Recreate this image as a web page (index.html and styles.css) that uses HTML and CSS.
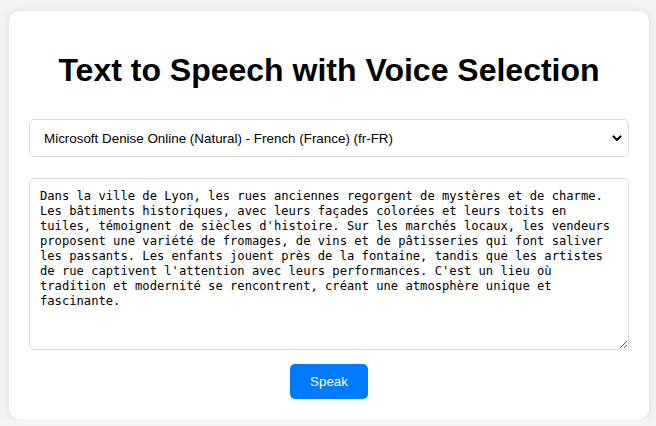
FILE: index.html
```html
<!DOCTYPE html>
<html lang="fr">
<head>
<meta charset="utf-8">
<title>Text to Speech with Voice Selection</title>
<link rel="stylesheet" href="styles.css">
</head>
<body>
<div class="card">
  <h1 class="title">Text to Speech with Voice Selection</h1>
  <div class="select-wrap">
    <select class="voice-select">
      <option>Microsoft Denise Online (Natural) - French (France) (fr-FR)</option>
    </select>
    <svg class="chevron" width="10" height="7" viewBox="0 0 10 7" aria-hidden="true"><path d="M1.5 1.5 L5 5 L8.5 1.5" fill="none" stroke="#000" stroke-width="2.2" stroke-linecap="round" stroke-linejoin="round"/></svg>
  </div>
  <textarea class="text-input">Dans la ville de Lyon, les rues anciennes regorgent de mystères et de charme. Les bâtiments historiques, avec leurs façades colorées et leurs toits en tuiles, témoignent de siècles d'histoire. Sur les marchés locaux, les vendeurs proposent une variété de fromages, de vins et de pâtisseries qui font saliver les passants. Les enfants jouent près de la fontaine, tandis que les artistes de rue captivent l'attention avec leurs performances. C'est un lieu où tradition et modernité se rencontrent, créant une atmosphère unique et fascinante.</textarea>
  <div class="actions">
    <button class="speak-btn" type="button">Speak</button>
  </div>
</div>
</body>
</html>
```
FILE: styles.css
```css
html, body {
  margin: 0;
  padding: 0;
}
body {
  background: #f4f4f4;
  font-family: "Liberation Sans", Arial, sans-serif;
  padding: 11px 7px 0 9px;
}
.card {
  background: #fff;
  border-radius: 10px;
  box-shadow: 0 0 10px rgba(0, 0, 0, 0.1);
  padding: 20px;
  display: flex;
  flex-direction: column;
}
.title {
  font-family: "Liberation Sans", Arial, sans-serif;
  font-size: 32px;
  font-weight: bold;
  text-align: center;
  color: #000;
  margin: 21px 0 30px;
  line-height: 37px;
}
.select-wrap {
  position: relative;
  margin-bottom: 21px;
}
.voice-select {
  display: block;
  width: 100%;
  height: 38px;
  box-sizing: border-box;
  padding: 0 10px 0 14px;
  font-family: "Liberation Sans", Arial, sans-serif;
  font-size: 13.4px;
  color: #000;
  background: #fff;
  border: 1px solid #ddd;
  border-radius: 5px;
  appearance: none;
  -webkit-appearance: none;
}
.chevron {
  position: absolute;
  right: 7px;
  top: 16px;
  pointer-events: none;
}
.text-input {
  display: block;
  width: 100%;
  height: 172px;
  box-sizing: border-box;
  padding: 10px;
  border: 1px solid #ddd;
  border-radius: 5px;
  font-family: "DejaVu Sans Mono", monospace;
  font-size: 12.15px;
  line-height: 15px;
  color: #000;
  resize: vertical;
  margin: 0;
}
.actions {
  display: flex;
  justify-content: center;
  margin-top: 14px;
}
.speak-btn {
  background: #007bff;
  color: #fff;
  border: none;
  border-radius: 5px;
  padding: 10px 20px;
  font-family: "Liberation Sans", Arial, sans-serif;
  font-size: 13.33px;
  line-height: 15px;
  cursor: pointer;
}
```
